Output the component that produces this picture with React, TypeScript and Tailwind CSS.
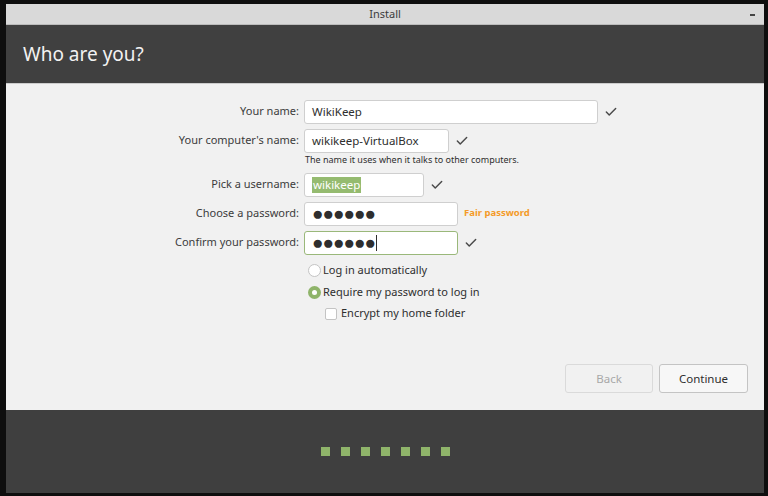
import { Check } from 'lucide-react';

const font = { fontFamily: '"Noto Sans", "Open Sans", sans-serif' };

function Field({ label, value, width, check, extra, focused, selected, dots }: {
  label: string;
  value?: string;
  width: string;
  check?: boolean;
  extra?: React.ReactNode;
  focused?: boolean;
  selected?: boolean;
  dots?: number;
}) {
  return (
    <div className="flex items-center h-[29px]">
      <div className="w-[298px] pr-[5px] text-right text-[11px] text-[#3c3c3c]">{label}</div>
      <div
        className={`${width} h-[24px] rounded-[3px] border bg-white flex items-center px-[7px] text-[11.5px] text-[#2e2e2e] ${
          focused ? 'border-[#9ab87a]' : 'border-[#cfcfcf]'
        }`}
      >
        {dots ? (
          <span className="tracking-[-1px] text-[19px] leading-none">{'●'.repeat(dots)}</span>
        ) : selected ? (
          <span className="bg-[#95bb70] text-white px-px leading-[16px]">{value}</span>
        ) : (
          <span>{value}</span>
        )}
        {focused && <span className="w-px h-[16px] bg-[#2e2e2e] ml-px" />}
      </div>
      {check && <Check className="w-[14px] h-[14px] ml-[6px] text-[#4a4a4a]" strokeWidth={2.5} />}
      {extra}
    </div>
  );
}

export default function App() {
  return (
    <div className="w-[768px] h-[496px] bg-[#0e0e0e] pt-[4px] pl-[6px] pr-[4px] pb-[3px]" style={font}>
      <div className="w-[758px] h-[489px] flex flex-col">
        <div className="h-[21px] bg-[#d9d9d9] border-b border-[#bcbcbc] flex items-center justify-center relative">
          <span className="text-[11px] text-[#3c3c3c]">Install</span>
          <span className="absolute right-[9px] top-[10px] w-[5px] h-[2px] bg-[#444]" />
        </div>
        <div className="h-[58px] bg-[#404040] flex items-center pl-[17px]">
          <span className="text-[19px] text-[#f2f2f2]">Who are you?</span>
        </div>
        <div className="h-[327px] bg-[#f1f1f1] border-t border-[#cccccc] flex flex-col pt-[13px] relative">
          <Field label="Your name:" value="WikiKeep" width="w-[294px]" check />
          <Field label="Your computer's name:" value="wikikeep-VirtualBox" width="w-[145px]" check />
          <div className="pl-[299px] text-[9px] text-[#2e2e2e] -mt-[1px] mb-[4px] leading-[12px]">
            The name it uses when it talks to other computers.
          </div>
          <Field label="Pick a username:" value="wikikeep" width="w-[120px]" check selected />
          <Field
            label="Choose a password:"
            width="w-[154px]"
            dots={6}
            extra={<span className="ml-[6px] text-[9.5px] font-bold text-[#f49b29]">Fair password</span>}
          />
          <Field label="Confirm your password:" width="w-[154px]" dots={6} focused check />

          <div className="pl-[302px] mt-[2px] flex flex-col text-[11px] text-[#2e2e2e]">
            <div className="flex items-center h-[22px] gap-[2px]">
              <span className="w-[13px] h-[13px] rounded-full border border-[#c4c4c4] bg-white" />
              <span>Log in automatically</span>
            </div>
            <div className="flex items-center h-[22px] gap-[2px]">
              <span className="w-[13px] h-[13px] rounded-full bg-[#8fb46a] flex items-center justify-center">
                <span className="w-[5px] h-[5px] rounded-full bg-white" />
              </span>
              <span>Require my password to log in</span>
            </div>
            <div className="flex items-center h-[21px] gap-[4px] pl-[17px]">
              <span className="w-[12px] h-[12px] rounded-[2px] border border-[#c4c4c4] bg-white" />
              <span>Encrypt my home folder</span>
            </div>
          </div>

          <div className="absolute right-[16px] bottom-[17px] flex gap-[6px] text-[11.5px]">
            <div className="w-[88px] h-[29px] rounded-[3px] border border-[#dadada] bg-[#f1f1f1] flex items-center justify-center text-[#a8a8a8]">
              Back
            </div>
            <div className="w-[89px] h-[29px] rounded-[3px] border border-[#c4c4c4] bg-[#f7f7f7] flex items-center justify-center text-[#2e2e2e]">
              Continue
            </div>
          </div>
        </div>
        <div className="flex-1 bg-[#3f3f3f] flex items-center justify-center pl-[1px]">
          <div className="flex gap-[11px]">
            {[0, 1, 2, 3, 4, 5, 6].map(i => (
              <span key={i} className="w-[9px] h-[9px] bg-[#8fb46a]" />
            ))}
          </div>
        </div>
      </div>
    </div>
  );
}
